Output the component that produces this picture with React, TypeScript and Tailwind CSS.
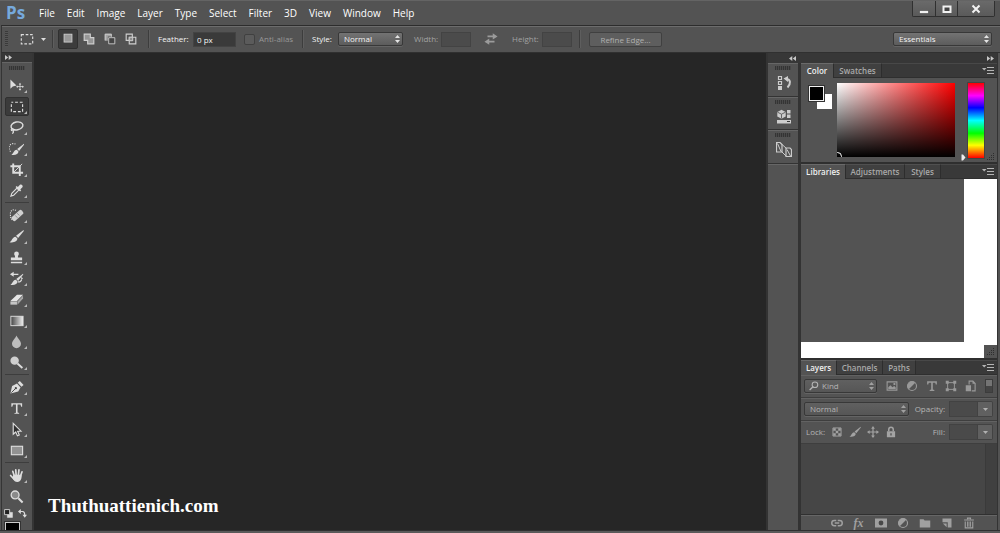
import { useState, type ReactNode } from "react";
import clsx from "clsx";

const menus = ["File", "Edit", "Image", "Layer", "Type", "Select", "Filter", "3D", "View", "Window", "Help"];

type IconProps = { children: ReactNode; className?: string };

function Icon({ children, className = "size-4" }: IconProps) {
  return (
    <svg
      viewBox="0 0 16 16"
      className={clsx("shrink-0", className)}
      fill="none"
      stroke="currentColor"
      strokeWidth="1"
      aria-hidden="true"
    >
      {children}
    </svg>
  );
}

const brushShape = (
  <>
    <path d="M15.500 1 7.500 7.300 9.700 9.500 15.800 2z" fill="currentColor" stroke="none" />
    <path d="M7 8.200 9 10.200c0 3-4 4.800-8.500 3.800C3.500 13 3 8.800 7 8.200z" fill="currentColor" stroke="none" />
  </>
);

const moveCross = (
  <path
    d="M8 0 10.500 3.500H8.800V7.200H12.500V5.500L16 8l-3.500 2.500V8.800H8.800V12.500H10.500L8 16l-2.500-3.500h1.700V8.800H3.500V10.500L0 8l3.500-2.500v1.700H7.200V3.500H5.500z"
    fill="currentColor"
    stroke="none"
  />
);

const toolGroups: { name: string; plain?: boolean; art: ReactNode }[][] = [
  [
    {
      name: "Move",
      art: (
        <>
          <path d="M1.500 1.500v10l2.500-2.500L8 8z" fill="currentColor" stroke="none" />
          <g transform="translate(7.500 5) scale(.53)">{moveCross}</g>
        </>
      ),
    },
    { name: "Rectangular Marquee", art: <path d="M2.500 3.500h12v10h-12z" strokeDasharray="3 2" strokeDashoffset="1" strokeWidth="1.200" /> },
    {
      name: "Lasso",
      art: (
        <>
          <ellipse cx="8.500" cy="6.300" rx="6.400" ry="4.200" transform="rotate(-12 8.500 6.300)" strokeWidth="1.500" />
          <path d="M3.500 9c-1.800.8-1.500 2.700.5 2.500 1.500-.2 1.200-2-.3-1.800M4.500 11.500c.5 1.300 0 2.500-1.200 3" strokeWidth="1.200" />
        </>
      ),
    },
    {
      name: "Quick Selection",
      art: (
        <>
          <path d="M7 3.300a4.700 4.700 0 1 0-4.500 8.500" strokeDasharray="1.300 1.200" strokeWidth="1.200" />
          <g transform="translate(2 2) scale(.9)">{brushShape}</g>
        </>
      ),
    },
    {
      name: "Crop",
      art: (
        <>
          <path d="M4.500 1.500v10H15M1.500 4.500h10V15" strokeWidth="2" />
          <path d="m4.500 11.500 9.500-9.500" />
        </>
      ),
    },
    {
      name: "Eyedropper",
      art: (
        <>
          <path d="m2 14 1-3 5.500-5.500 2 2L5 13z" strokeWidth="1.200" />
          <path d="m7 4.200 4.800 4.800 1.200-1.200-1-1L14.300 4.500c1.300-1.500-1.100-3.900-2.600-2.600L9.400 4.200l-1.200-1z" fill="currentColor" stroke="none" />
        </>
      ),
    },
  ],
  [
    {
      name: "Spot Healing Brush",
      art: (
        <>
          <path d="M7.500 2.500C4 .8 1.500 3 1.500 6s0 5 2 6.500" strokeDasharray="1.200 1.200" strokeWidth="1.200" />
          <rect x="2" y="5.200" width="14" height="5.600" rx="2" transform="rotate(-42 9 8)" fill="#d0d0d0" stroke="none" />
          <path d="m6.200 7.700 4 3.700M8.500 5.500l4 3.700" stroke="#6d6d6d" strokeDasharray="1 1" />
        </>
      ),
    },
    { name: "Brush", art: brushShape },
    {
      name: "Clone Stamp",
      art: (
        <path
          d="M5.500 4a2.500 2.500 0 0 1 5 0c0 1.500-1 1.500-1 4H14v3H2V8h4.500c0-2.500-1-2.500-1-4zM2 12.500h12V14H2z"
          fill="currentColor"
          stroke="none"
        />
      ),
    },
    {
      name: "History Brush",
      art: (
        <>
          <g transform="translate(1 2) scale(.9)">{brushShape}</g>
          <path d="M3 3.500h7M9.500 11.500c2 .5 3.500-.5 4-2.500" strokeWidth="1.400" />
          <path d="M1 3.500 5 .8v5.400zM11 13.500h3M13 6l2 2-2 1z" fill="currentColor" stroke="none" />
        </>
      ),
    },
    {
      name: "Eraser",
      art: (
        <>
          <path d="M1.500 9.500 8.500 3h6.500L8.500 9.500z" fill="#e4e4e4" stroke="none" />
          <path d="M1.500 10h7v3.500h-7z" fill="#c5c5c5" stroke="none" />
          <path d="m9 10 6-6.200v3.200L9 13.500z" fill="#a5a5a5" stroke="none" />
        </>
      ),
    },
    {
      name: "Gradient",
      art: (
        <>
          <defs>
            <linearGradient id="tool-gradient">
              <stop stopColor="#444444" />
              <stop offset="1" stopColor="#efefef" />
            </linearGradient>
          </defs>
          <rect x="2" y="3.500" width="13" height="10" fill="url(#tool-gradient)" />
        </>
      ),
    },
    {
      name: "Blur",
      art: <path d="M8 1.500c1.500 3.800 4.800 5.500 4.800 8.800a4.800 4.800 0 0 1-9.600 0C3.200 7 6.500 5.300 8 1.500z" fill="#bdbdbd" stroke="none" />,
    },
    {
      name: "Dodge",
      art: (
        <>
          <circle cx="6" cy="6" r="4.500" fill="#cfcfcf" stroke="none" />
          <path d="m9 9 5.300 4.800" strokeWidth="2" />
        </>
      ),
    },
  ],
  [
    {
      name: "Pen",
      art: (
        <>
          <path d="m1.500 14.500 1.800-8 5.200-2.700L12.300 8l-2.500 4.300z" fill="currentColor" stroke="none" />
          <path d="m9.300 3 2.200-2 4 4.200-2.200 2z" fill="currentColor" stroke="none" />
          <path d="m2.500 13.500 4-4" stroke="#454545" />
          <circle cx="7.300" cy="8.700" r="1.200" fill="#454545" stroke="none" />
        </>
      ),
    },
    {
      name: "Horizontal Type",
      art: (
        <path
          d="M2.500 2.500h11.500V6h-1l-.8-2.200H9.100v8.500l1.700.6v.8H5.700V13l1.700-.6V3.800H4.300L3.500 6h-1z"
          fill="currentColor"
          stroke="none"
        />
      ),
    },
    { name: "Path Selection", art: <path d="M4.500 1.500v11.500L7.200 10.700l1.800 4 2-.9-1.800-4h3.600z" fill="#303030" strokeWidth="1.200" /> },
    { name: "Rectangle", art: <rect x="2.500" y="3.500" width="12" height="9" fill="#929292" strokeWidth="1.200" /> },
  ],
  [
    {
      name: "Hand",
      art: (
        <>
          <path d="M5.500 8 4 3.500M7.600 7.500 7.200 2M10 7.500l.6-5.500M12.400 8.200l1.500-4.200M5 11.500 1.700 8" strokeWidth="1.800" strokeLinecap="round" />
          <path d="M4.600 7.300h8.800c.5 3.500-.8 7.700-4.400 7.700-2.700 0-4-1.700-5.300-4.300z" fill="currentColor" stroke="none" />
        </>
      ),
    },
    {
      name: "Zoom",
      plain: true,
      art: (
        <>
          <circle cx="6.500" cy="6.300" r="4.200" fill="#8a8a8a" strokeWidth="1.400" />
          <path d="m10 9.800 4.500 4.500" strokeWidth="2.200" />
        </>
      ),
    },
  ],
];

function Grip() {
  return (
    <div className="mx-auto h-1 w-4 shrink-0 bg-[repeating-linear-gradient(90deg,#343434_0_1px,#494949_1px_2px)]" aria-hidden="true" />
  );
}

function DoubleArrow({ flip = false }: { flip?: boolean }) {
  return (
    <svg viewBox="0 0 7 5" className={clsx("h-[5px] w-[7px]", flip && "rotate-180")} fill="#c8c8c8" aria-hidden="true">
      <path d="M0 0l3.200 2.500L0 5zM3.700 0 7 2.500 3.700 5z" />
    </svg>
  );
}

type DropdownProps = { label: string; value: string; className?: string; dim?: boolean; search?: boolean };

function Dropdown({ label, value, className, dim = false, search = false }: DropdownProps) {
  return (
    <div className={clsx("relative h-[14px] shrink-0", className)}>
      <select
        aria-label={label}
        disabled={dim}
        className={clsx(
          "block size-full appearance-none rounded-[2px] border border-[#383838] bg-linear-to-b text-[8px] leading-[10px] opacity-100 shadow-[0_1px_0_#646464]",
          dim ? "from-[#606060] to-[#565656] text-[#b5b5b5]" : "from-[#737373] to-[#5c5c5c] text-[#f4f4f4]",
          search ? "pl-[17px]" : "pl-[5px]",
        )}
      >
        <option>{value}</option>
      </select>
      {search && (
        <Icon className="pointer-events-none absolute top-[2px] left-[5px] size-[10px] text-[#b5b5b5]">
          <circle cx="9.500" cy="6" r="4.500" strokeWidth="1.700" />
          <path d="m6 9.500-5 5" strokeWidth="2" />
        </Icon>
      )}
      <svg
        viewBox="0 0 5 8"
        className={clsx("pointer-events-none absolute top-[3px] right-[3px] h-2 w-[5px]", dim ? "fill-[#a0a0a0]" : "fill-[#e4e4e4]")}
        aria-hidden="true"
      >
        <path d="M0 3 2.500 0 5 3zM0 5h5L2.500 8z" />
      </svg>
    </div>
  );
}

function WindowButtons() {
  const button = "flex h-[15px] items-center justify-center border-r border-[#303030] bg-linear-to-b from-[#6a6a6a] to-[#5a5a5a]";
  return (
    <div className="mr-[5px] ml-auto flex self-start rounded-b-[2px] border-b border-l border-[#303030] text-[#f2f2f2]">
      <button type="button" aria-label="Minimize" className={clsx(button, "w-[23px]")}>
        <svg viewBox="0 0 10 10" className="size-[10px]" aria-hidden="true">
          <path d="M.5 6.500h9v3h-9z" fill="currentColor" stroke="#333333" strokeWidth=".5" />
        </svg>
      </button>
      <button type="button" aria-label="Maximize" className={clsx(button, "w-[22px]")}>
        <svg viewBox="0 0 10 10" className="size-[10px]" aria-hidden="true">
          <path d="M1.500 2.500h7v5.500h-7z" fill="#444444" stroke="currentColor" strokeWidth="2" />
        </svg>
      </button>
      <button type="button" aria-label="Close" className={clsx(button, "w-[37px]")}>
        <svg viewBox="0 0 10 10" className="size-[10px]" aria-hidden="true">
          <path d="m1.500 1.500 7 7m0-7-7 7" stroke="currentColor" strokeWidth="2" />
        </svg>
      </button>
    </div>
  );
}

function MenuBar() {
  return (
    <header className="flex h-[25px] shrink-0 items-center border-t border-[#646464]">
      <h1 className="w-[39px] pl-[6px] text-[17px] leading-[22px] font-bold text-[#76a9dc]">Ps</h1>
      <nav className="flex gap-3 text-[10px] leading-4 text-white">
        {menus.map((menu) => (
          <button type="button" key={menu}>
            {menu}
          </button>
        ))}
      </nav>
      <WindowButtons />
    </header>
  );
}

const selectionModes = [
  {
    name: "New selection",
    art: <rect x="3.500" y="2.500" width="9" height="9" fill="#999999" />,
  },
  {
    name: "Add to selection",
    art: <path d="M2.500 2.500h7v4h4v7h-7v-4h-4z" fill="#969696" strokeWidth="1.300" />,
  },
  {
    name: "Subtract from selection",
    art: (
      <>
        <path d="M2 2h8v3H5.500v5H2z" fill="#a5a5a5" stroke="none" />
        <path d="M2.500 9.500v-7h7v3" />
        <path d="M6.500 6.500h7v7h-7z" fill="#454545" />
      </>
    ),
  },
  {
    name: "Intersect with selection",
    art: (
      <>
        <path d="M2.500 2.500h7v7h-7zM6 6h7.500v7.500H6z" strokeWidth="1.300" />
        <path d="M6 6h4v4H6z" fill="#8e8e8e" />
      </>
    ),
  },
];

function Divider() {
  return <div className="h-[18px] w-px shrink-0 bg-[#3d3d3d] shadow-[1px_0_0_#5e5e5e]" />;
}

function OptionsBar() {
  const [mode, setMode] = useState(0);
  const field = "h-[15px] shrink-0 border border-[#434343] px-[3px] text-[8px]";

  return (
    <div className="ml-px flex h-[28px] shrink-0 items-center border-t border-b border-l border-t-[#2d2d2d] border-b-[#303030] border-l-[#353535] pr-2 text-[8px] text-[#f4f4f4] shadow-[inset_0_1px_0_#6c6c6c]">
      <div className="ml-[3px] h-4 w-[3px] bg-[repeating-linear-gradient(#3a3a3a_0_1px,#565656_1px_2px)]" />
      <button type="button" aria-label="Tool preset" className="ml-3 flex w-8 items-center gap-[7px] text-[#dedede]">
        <Icon className="size-[14px]">
          <path d="M1.500 3h13v10.500h-13z" strokeDasharray="3 2" strokeWidth="1.300" />
        </Icon>
        <svg viewBox="0 0 5 3" className="h-[3px] w-[5px] fill-current" aria-hidden="true">
          <path d="M0 0h5L2.500 3z" />
        </svg>
      </button>
      <Divider />
      <div className="mx-[5px] flex w-[85px] gap-px">
        {selectionModes.map(({ name, art }, index) => (
          <button
            type="button"
            key={name}
            aria-label={name}
            aria-pressed={mode === index}
            onClick={() => setMode(index)}
            className={clsx(
              "flex h-5 w-5 shrink-0 items-center justify-center rounded-[2px] text-[#cfcfcf]",
              mode === index && "border border-[#303030] bg-[#3c3c3c]",
            )}
          >
            <Icon className="size-[14px]">{art}</Icon>
          </button>
        ))}
      </div>
      <Divider />
      <label htmlFor="feather" className="ml-[9px] w-[35px]">
        Feather:
      </label>
      <input id="feather" defaultValue="0 px" className={clsx(field, "w-[43px] bg-[#3a3a3a]")} />
      <label className="ml-2 flex w-[58px] items-center gap-1 whitespace-nowrap text-[#989898]">
        <input
          type="checkbox"
          disabled
          className="size-[11px] shrink-0 appearance-none rounded-[2px] border border-[#404040] bg-[#5b5b5b]"
        />
        Anti-alias
      </label>
      <Divider />
      <span className="ml-[9px] w-[26px]">Style:</span>
      <Dropdown label="Style" value="Normal" className="w-[65px]" />
      <label htmlFor="width" className="ml-[11px] w-[27px] text-[#a2a2a2]">
        Width:
      </label>
      <input id="width" disabled className={clsx(field, "w-[30px] bg-[#4b4b4b]")} />
      <button type="button" aria-label="Swap width and height" disabled className="mx-[13px] text-[#9b9b9b]">
        <Icon className="size-[14px]">
          <path d="M4 5h7M5 11h7" strokeWidth="2" />
          <path d="M10 1.500 15.500 5 10 8.500zM6 7.500.5 11 6 14.500z" fill="currentColor" stroke="none" />
        </Icon>
      </button>
      <label htmlFor="height" className="ml-px w-[30px] text-[#a2a2a2]">
        Height:
      </label>
      <input id="height" disabled className={clsx(field, "mr-[7px] w-[30px] bg-[#4b4b4b]")} />
      <Divider />
      <button
        type="button"
        disabled
        className="ml-[9px] h-[15px] w-[73px] rounded-[2px] border border-[#404040] bg-[#5e5e5e] leading-[11px] text-[#b0b0b0]"
      >
        Refine Edge...
      </button>
      <Dropdown label="Workspace" value="Essentials" className="ml-auto w-[99px]" />
    </div>
  );
}

function Toolbar() {
  const [active, setActive] = useState("Rectangular Marquee");

  return (
    <aside className="ml-px flex w-[33px] shrink-0 flex-col overflow-hidden border-r-2 border-l border-r-[#353535] border-l-[#353535]">
      <div className="flex h-[9px] shrink-0 items-center bg-[#373737] pl-[3px]">
        <DoubleArrow />
      </div>
      <div className="border-t border-[#656565] pt-[3px] pb-[5px]">
        <Grip />
      </div>
      {toolGroups.map((group, index) => (
        <div
          key={group[0].name}
          className={clsx("mx-[3px] shrink-0", index > 0 && "mt-px border-t border-[#3d3d3d] pt-[2px]")}
        >
          {group.map(({ name, plain, art }) => (
            <div key={name} className="flex h-[21px] items-center">
              <button
                type="button"
                aria-label={name}
                aria-pressed={active === name}
                onClick={() => setActive(name)}
                className={clsx(
                  "relative flex h-[19px] w-full items-center rounded-[2px] border pl-[3px] text-[#dddddd]",
                  active === name ? "border-[#303030] bg-[#3b3b3b]" : "border-transparent",
                )}
              >
                <Icon className="size-[15px]">{art}</Icon>
                {!plain && (
                  <svg viewBox="0 0 3 3" className="absolute right-px bottom-px size-[3px] fill-[#b8b8b8]" aria-hidden="true">
                    <path d="M3 0v3H0z" />
                  </svg>
                )}
              </button>
            </div>
          ))}
        </div>
      ))}
      <div className="flex h-3 shrink-0 items-center gap-[5px] pl-[2px] text-[#dddddd]">
        <button type="button" aria-label="Default colors">
          <Icon className="size-[9px]">
            <path d="M6 6h9v9H6z" fill="#dddddd" />
            <path d="M1 1h9v9H1z" fill="#222222" strokeWidth="1.500" />
          </Icon>
        </button>
        <button type="button" aria-label="Swap colors">
          <Icon className="size-[9px]">
            <path d="M4 4.500h4c3 0 4 1.500 4 6" strokeWidth="2" />
            <path d="M0 4.500 5 0v9zM8 10h8l-4 5.500z" fill="currentColor" stroke="none" />
          </Icon>
        </button>
      </div>
      <button
        type="button"
        aria-label="Foreground color"
        className="mt-[3px] ml-[3px] h-4 w-[15px] shrink-0 border border-[#cccccc] bg-black outline outline-[#333333]"
      />
    </aside>
  );
}

const dockIcons = [
  {
    name: "History",
    art: (
      <>
        <path d="M2.500 1.500h3v3h-3zM2.500 6.500h3v3h-3z" strokeWidth="1.200" />
        <path d="M2 11h4v4H2zM7.500 3.500 12 1v6z" fill="currentColor" stroke="none" />
        <path d="M10 4c5 0 5 5 1.500 8.500" strokeWidth="2" />
      </>
    ),
  },
  {
    name: "Properties",
    art: (
      <>
        <path d="M5.500.8 9.700 3v4.500L5.500 9.700 1.300 7.500V3z" fill="currentColor" stroke="none" />
        <path d="m1.500 3.200 4 2 4-2M5.500 5v4.500" stroke="#666666" />
        <path d="M11 1h3.500v3.500H11zM11 5.500h3.500V9H11zM1 11h14v3.500H1z" fill="currentColor" stroke="none" />
        <path d="M11 12.500h3" stroke="#3b3b3b" />
      </>
    ),
  },
  {
    name: "Libraries",
    art: (
      <>
        <path d="M.5.500H4l2 2v7.500H.5zM10 6h4l1.500 1.500V14.500H10z" strokeWidth="1.200" />
        <path d="m1.500 1.500 3.500 8M5.500 2l5 4.500M5.500 9.500l5 5M11 7.500l3.500 6.500" />
      </>
    ),
  },
];

function Dock() {
  return (
    <div className="flex w-[30px] shrink-0 flex-col bg-[#535353]">
      {dockIcons.map(({ name, art }) => (
        <div key={name} className="h-[33px] shrink-0 border-t border-b border-t-[#666666] border-b-[#333333] pt-[2px] odd:h-[34px]">
          <Grip />
          <button type="button" aria-label={name} className="mx-auto mt-[5px] block pl-[2px] text-[#cccccc]">
            <Icon>{art}</Icon>
          </button>
        </div>
      ))}
      <div className="flex-1 border-t border-[#666666]" />
    </div>
  );
}

function PanelTabs({ tabs }: { tabs: { label: string; width: string }[] }) {
  const [selected, setSelected] = useState(0);

  return (
    <div role="tablist" className="flex h-[15px] shrink-0 bg-[#393939] text-[8px] leading-[14px] font-semibold">
      {tabs.map(({ label, width }, index) => (
        <button
          type="button"
          role="tab"
          key={label}
          aria-selected={selected === index}
          onClick={() => setSelected(index)}
          className={clsx(
            "shrink-0 border-t border-r border-r-[#2d2d2d] text-center whitespace-nowrap",
            width,
            selected === index
              ? "border-t-[#6a6a6a] bg-[#535353] text-[#f0f0f0]"
              : "border-b border-t-[#505050] border-b-[#2f2f2f] bg-[#404040] text-[#a9a9a9]",
          )}
        >
          {label}
        </button>
      ))}
      <div className="flex flex-1 items-center justify-end border-t border-b border-t-[#484848] border-b-[#2f2f2f] pr-[3px]">
        <button type="button" aria-label="Panel menu">
          <svg viewBox="0 0 12 7" className="h-[7px] w-3" fill="#b5b5b5" aria-hidden="true">
            <path d="M0 1h4.500L2.200 3.500zM5 0h7v1H5zM5 3h7v1H5zM5 6h7v1H5z" />
          </svg>
        </button>
      </div>
    </div>
  );
}

function ResizeGrip() {
  return (
    <svg viewBox="0 0 8 8" className="size-2" fill="#2e2e2e" aria-hidden="true">
      <path d="M6 0h1v1H6zM4 2h1v1H4zM6 2h1v1H6zM2 4h1v1H2zM4 4h1v1H4zM6 4h1v1H6zM0 6h1v1H0zM2 6h1v1H2zM4 6h1v1H4zM6 6h1v1H6z" />
    </svg>
  );
}

function ColorPanel() {
  return (
    <section className="shrink-0 border-b-2 border-[#2f2f2f]">
      <PanelTabs
        tabs={[
          { label: "Color", width: "w-[33px]" },
          { label: "Swatches", width: "w-[48px]" },
        ]}
      />
      <div className="flex h-[84px] pt-[5px] pl-[7px]">
        <div className="relative mt-[2px] h-[26px] w-[29px] shrink-0">
          <button type="button" aria-label="Background color" className="absolute top-[9px] left-[9px] size-[15px] bg-white" />
          <button
            type="button"
            aria-label="Foreground color"
            className="absolute top-px left-px size-[15px] border border-[#f0f0f0] bg-black outline outline-[#333333]"
          />
        </div>
        <div className="relative h-[74px] flex-1 overflow-hidden bg-[linear-gradient(to_top,#000,transparent),linear-gradient(to_right,#fff,#f00)]">
          <div className="absolute -bottom-1 -left-1 size-[9px] rounded-full border border-white" />
        </div>
        <div className="flex w-[13px] shrink-0 items-end justify-end">
          <svg viewBox="0 0 5 7" className="mr-[2px] mb-px h-[7px] w-[5px]" aria-hidden="true">
            <path d="M.5.5H2L4.500 3.500 2 6.500H.5z" fill="#eeeeee" />
          </svg>
        </div>
        <div className="h-[75px] w-4 shrink-0 bg-[linear-gradient(#f00,#f0f_17%,#00f_33%,#0ff_50%,#0f0_67%,#ff0_83%,#f00)] outline outline-[#444444]" />
        <div className="flex w-[13px] items-end justify-center pb-px">
          <ResizeGrip />
        </div>
      </div>
    </section>
  );
}

function LibrariesPanel() {
  return (
    <section className="shrink-0 border-b-2 border-[#2f2f2f]">
      <PanelTabs
        tabs={[
          { label: "Libraries", width: "w-[45px]" },
          { label: "Adjustments", width: "w-[59px]" },
          { label: "Styles", width: "w-[36px]" },
        ]}
      />
      <div className="flex h-[179px] flex-col bg-white">
        <div className="mr-[33px] flex-1 bg-[#535353]" />
        <div className="flex h-4 items-end justify-end">
          <div className="flex size-[13px] items-center justify-center bg-[#535353]">
            <ResizeGrip />
          </div>
        </div>
      </div>
    </section>
  );
}

const layerFilters = [
  {
    name: "Filter pixel layers",
    art: (
      <>
        <path d="M1.500 2.500h13v11h-13z" strokeWidth="1.500" />
        <path d="M3 12V9.500l3-2.500 2.500 2.500L11 8l2 2v2zM10 4h2.500v2.500H10z" fill="currentColor" stroke="none" />
      </>
    ),
  },
  {
    name: "Filter adjustment layers",
    art: (
      <>
        <circle cx="8" cy="8" r="6" strokeWidth="1.500" />
        <path d="M3.700 12.300a6 6 0 0 1 8.600-8.600z" fill="currentColor" stroke="none" />
      </>
    ),
  },
  {
    name: "Filter type layers",
    art: <path d="M1.500 1.500h13V6H13l-.7-2.300H9.100v9l2 .5v1.300H4.900v-1.300l2-.5v-9H3.700L3 6H1.500z" fill="currentColor" stroke="none" />,
  },
  {
    name: "Filter shape layers",
    art: (
      <>
        <path d="M3.500 3.500h9v9h-9z" strokeWidth="1.300" />
        <path d="M1 1h4v4H1zM11 1h4v4h-4zM1 11h4v4H1zM11 11h4v4h-4z" fill="currentColor" stroke="none" />
      </>
    ),
  },
  {
    name: "Filter smart objects",
    art: (
      <>
        <path d="M5.500 6V1.500h5l3 3v10H9" strokeWidth="1.500" />
        <path d="M1 7h7v8H1zM10 1v4h4z" fill="currentColor" stroke="none" />
      </>
    ),
  },
];

const lockOptions = [
  {
    name: "Lock transparent pixels",
    art: (
      <>
        <path d="M1.500 1.500h13v13h-13z" strokeWidth="1.500" />
        <path d="M2 2h4v4H2zM10 2h4v4h-4zM6 6h4v4H6zM2 10h4v4H2zM10 10h4v4h-4z" fill="currentColor" stroke="none" />
      </>
    ),
  },
  { name: "Lock image pixels", art: brushShape },
  { name: "Lock position", art: moveCross },
  {
    name: "Lock all",
    art: (
      <>
        <path d="M5 7V4.500a3 3 0 0 1 6 0V7" strokeWidth="2" />
        <path d="M2.500 7h11v8h-11z" fill="currentColor" stroke="none" />
        <path d="M8 9.500v3" stroke="#444444" strokeWidth="1.500" />
      </>
    ),
  },
];

const layerActions = [
  {
    name: "Link layers",
    art: <path d="M7 4.500H4.500a3.500 3.500 0 0 0 0 7H7M9 4.500h2.500a3.500 3.500 0 0 1 0 7H9M5 8h6" strokeWidth="2" />,
  },
  { name: "Add a layer style", art: null },
  {
    name: "Add layer mask",
    art: (
      <>
        <path d="M0 2h16v12H0z" fill="currentColor" stroke="none" />
        <circle cx="8" cy="8" r="3.200" fill="#484848" stroke="none" />
      </>
    ),
  },
  { name: "New adjustment layer", art: layerFilters[1].art },
  { name: "New group", art: <path d="M1 3h5l1.500 1.500H15V14H1z" fill="currentColor" stroke="none" /> },
  {
    name: "New layer",
    art: (
      <>
        <path d="M2 2h12v12H9V7H2z" fill="currentColor" stroke="none" />
        <path d="M2.500 8.500h5v5z" fill="currentColor" stroke="none" />
      </>
    ),
  },
  {
    name: "Delete layer",
    art: (
      <>
        <path d="M1.500 4h13M6 3V1.500h4V3M3 6v8.500h10V6" strokeWidth="1.500" />
        <path d="M6 6v7M8 6v7M10 6v7" strokeWidth="1.200" />
      </>
    ),
  },
];

function AmountField({ id, label }: { id: string; label: string }) {
  return (
    <div className="ml-auto flex shrink-0 items-center">
      <label htmlFor={id} className="mr-1">
        {label}
      </label>
      <input id={id} disabled className="h-4 w-[29px] border border-[#424242] bg-[#4a4a4a]" />
      <button
        type="button"
        disabled
        aria-label={`${label} slider`}
        className="flex h-4 w-[15px] items-center justify-center rounded-r-[2px] border border-l-0 border-[#424242] bg-[#606060]"
      >
        <svg viewBox="0 0 5 3" className="h-[3px] w-[5px] fill-[#b0b0b0]" aria-hidden="true">
          <path d="M0 0h5L2.500 3z" />
        </svg>
      </button>
    </div>
  );
}

function LayersPanel() {
  const row = "flex h-[23px] shrink-0 items-center border-b border-[#3e3e3e] pr-1 pl-[3px] shadow-[inset_0_1px_0_#626262]";

  return (
    <section className="flex min-h-0 flex-1 flex-col text-[8px] text-[#b5b5b5]">
      <PanelTabs
        tabs={[
          { label: "Layers", width: "w-[36px]" },
          { label: "Channels", width: "w-[46px]" },
          { label: "Paths", width: "w-[33px]" },
        ]}
      />
      <div className={row}>
        <Dropdown label="Filter kind" value="Kind" dim search className="w-[73px]" />
        <div className="ml-[9px] flex flex-1 items-center justify-between">
          {layerFilters.map(({ name, art }) => (
            <button type="button" key={name} aria-label={name} className="text-[#999999]">
              <Icon className="size-3">{art}</Icon>
            </button>
          ))}
          <button
            type="button"
            aria-label="Toggle layer filtering"
            className="h-[14px] w-2 border border-[#3c3c3c] bg-linear-to-b from-[#747474] from-50% to-[#444444] to-50%"
          />
        </div>
      </div>
      <div className={row}>
        <Dropdown label="Blend mode" value="Normal" dim className="w-[105px]" />
        <AmountField id="opacity" label="Opacity:" />
      </div>
      <div className={row}>
        <span className="w-[27px] pl-[2px]">Lock:</span>
        <div className="flex items-center gap-[6px] text-[#a3a3a3]">
          {lockOptions.map(({ name, art }) => (
            <button type="button" key={name} aria-label={name} className="flex w-3 justify-center">
              <Icon className={name === "Lock transparent pixels" ? "size-[10px]" : "size-3"}>{art}</Icon>
            </button>
          ))}
        </div>
        <AmountField id="fill" label="Fill:" />
      </div>
      <div className="min-h-4 flex-1 bg-[#464646]">
        <div className="ml-auto h-full w-3 border-l border-[#3a3a3a] bg-[#404040]" />
      </div>
      <div className="flex h-4 shrink-0 items-center justify-center gap-[10px] border-t border-[#303030] pl-[7px] text-[#a0a0a0] shadow-[inset_0_1px_0_#666666]">
        {layerActions.map(({ name, art }) => (
          <button type="button" key={name} aria-label={name} className="flex w-3 items-center justify-center">
            {art ? (
              <Icon className="size-3">{art}</Icon>
            ) : (
              <span className="font-['Liberation_Serif',serif] text-[12px] leading-[12px] font-bold italic">fx</span>
            )}
          </button>
        ))}
      </div>
    </section>
  );
}

export default function App() {
  return (
    <div className="flex h-screen flex-col overflow-hidden bg-[#535353] font-['Open_Sans',sans-serif]">
      <MenuBar />
      <OptionsBar />
      <div className="flex min-h-0 flex-1">
        <Toolbar />
        <main className="flex flex-1 items-end bg-[#262626] pb-[13px] pl-[14px]">
          <p className="font-['Liberation_Serif',serif] text-[19px] leading-[22px] font-bold text-white">Thuthuattienich.com</p>
        </main>
        <div className="mr-[2px] flex w-[232px] shrink-0 flex-col border-r border-l-2 border-[#333333]">
          <div className="flex h-[10px] shrink-0 items-center bg-[#373737] pr-[3px]">
            <span className="flex w-[28px] justify-end">
              <DoubleArrow flip />
            </span>
            <span className="ml-auto">
              <DoubleArrow />
            </span>
          </div>
          <div className="flex min-h-0 flex-1">
            <Dock />
            <div className="flex min-w-0 flex-1 flex-col border-l-[3px] border-[#333333] bg-[#535353]">
              <ColorPanel />
              <LibrariesPanel />
              <LayersPanel />
            </div>
          </div>
        </div>
      </div>
      <footer className="h-[3px] shrink-0 border-t border-[#303030] bg-[#5a5a5a]" />
    </div>
  );
}
